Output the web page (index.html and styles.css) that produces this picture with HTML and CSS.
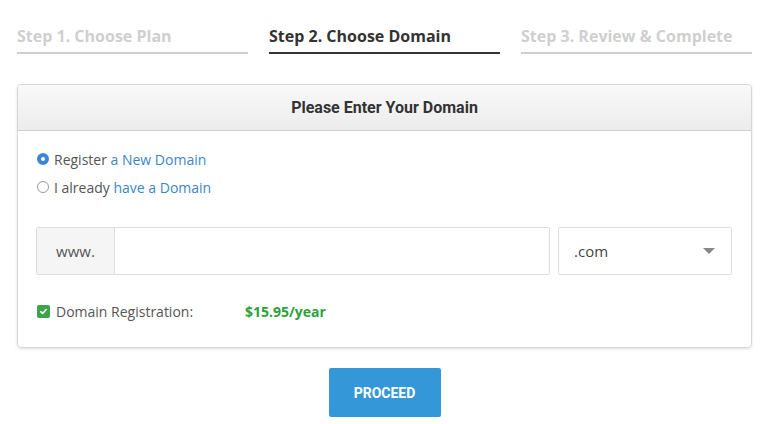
FILE: index.html
```html
<html>
<head>
  <meta charset="UTF-8">
  <meta name="viewport" content="width=device-width, initial-scale=1">
  <link rel="stylesheet" href="styles.css">
</head>
<body>
  <div class="page">

    <!-- steps -->
    <div class="steps">
      <div class="step">Step 1. Choose Plan</div>
      <div class="step active">Step 2. Choose Domain</div>
      <div class="step">Step 3. Review &amp; Complete</div>
    </div>

    <div class="panel">
      <div class="panel-head">Please Enter Your Domain</div>
      <div class="panel-body">
        <label class="radio-row">
          <span class="radio checked"></span>
          <span>Register <a href="#">a New Domain</a></span>
        </label>
        <label class="radio-row">
          <span class="radio"></span>
          <span>I already <a href="#">have a Domain</a></span>
        </label>

        <div class="domain-row">
          <div class="input-group">
            <span class="addon">www.</span>
            <span class="field"></span>
          </div>
          <div class="select">
            <span>.com</span>
            <span class="caret"></span>
          </div>
        </div>

        <div class="reg-row">
          <span class="check">
            <svg width="9" height="9" viewBox="0 0 10 10"><path d="M2 5.2l2 2 4-4.4" fill="none" stroke="#fff" stroke-width="1.8" stroke-linecap="round" stroke-linejoin="round"/></svg>
          </span>
          <span class="reg-label">Domain Registration:</span>
          <span class="price">$15.95/year</span>
        </div>
      </div>
    </div>

    <div class="actions">
      <button class="btn">PROCEED</button>
    </div>
  </div>
</body>
</html>
```

FILE: styles.css
```css
body {
  margin: 0;
  padding: 0;
  background: #fff;
  font-family: 'Open Sans', sans-serif;
  color: #555;
}
.page {
  width: 735px;
  padding: 25px 0 0 17px;
}

/* steps */
.steps {
  display: grid;
  grid-template-columns: 231px 231px 231px;
  column-gap: 21px;
}
.step {
  font-size: 16px;
  font-weight: 700;
  color: #cfcfcf;
  padding-bottom: 5px;
  border-bottom: 2px solid #cfcfcf;
  line-height: 22px;
}
.step.active {
  color: #333;
  border-bottom-color: #333;
}

/* panel */
.panel {
  margin-top: 30px;
  border: 1px solid #d6d6d6;
  border-radius: 4px;
  box-shadow: 0 1px 3px rgba(0,0,0,0.12);
  overflow: hidden;
}
.panel-head {
  height: 45px;
  line-height: 45px;
  text-align: center;
  font-family: Roboto, sans-serif;
  font-weight: 700;
  font-size: 16px;
  color: #333;
  background: linear-gradient(#f9f9f9, #ececec);
  border-bottom: 1px solid #cfcfcf;
}
.panel-body {
  padding: 14px 19px 26px 18px;
}
.radio-row {
  display: flex;
  align-items: center;
  gap: 5px;
  font-size: 14px;
  height: 28px;
  color: #555;
}
.radio-row a {
  color: #3a87c8;
  text-decoration: none;
}
.radio {
  width: 12px;
  height: 12px;
  border: 1px solid #999;
  border-radius: 50%;
  box-sizing: border-box;
  background: #fff;
  margin-left: 1px;
}
.radio.checked {
  border: 4px solid #3b86d6;
}

.domain-row {
  display: flex;
  gap: 8px;
  margin-top: 26px;
}
.input-group {
  display: flex;
  width: 514px;
  height: 48px;
  border: 1px solid #ddd;
  border-radius: 2px;
  box-sizing: border-box;
}
.addon {
  width: 77px;
  background: #f5f5f5;
  border-right: 1px solid #ddd;
  display: flex;
  align-items: center;
  justify-content: center;
  font-size: 15px;
  color: #555;
}
.field {
  flex: 1;
}
.select {
  width: 174px;
  height: 48px;
  box-sizing: border-box;
  border: 1px solid #ddd;
  border-radius: 2px;
  display: flex;
  align-items: center;
  justify-content: space-between;
  padding: 0 16px 0 15px;
  font-size: 15px;
  color: #444;
}
.caret {
  width: 0;
  height: 0;
  border-left: 6px solid transparent;
  border-right: 6px solid transparent;
  border-top: 6px solid #888;
}

.reg-row {
  display: flex;
  align-items: center;
  margin-top: 26px;
  font-size: 14px;
  height: 20px;
}
.check {
  width: 13px;
  height: 13px;
  border-radius: 2px;
  background: #3aa54a;
  display: flex;
  align-items: center;
  justify-content: center;
  margin-left: 1px;
}
.reg-label {
  margin-left: 6px;
  width: 189px;
  color: #555;
}
.price {
  font-weight: 700;
  color: #2ea23a;
}

.actions {
  display: flex;
  justify-content: center;
  margin-top: 20px;
}
.btn {
  width: 112px;
  height: 49px;
  border: none;
  border-radius: 2px;
  background: #3498d8;
  color: #fff;
  font-family: Roboto, sans-serif;
  font-weight: 700;
  font-size: 14px;
}
```
